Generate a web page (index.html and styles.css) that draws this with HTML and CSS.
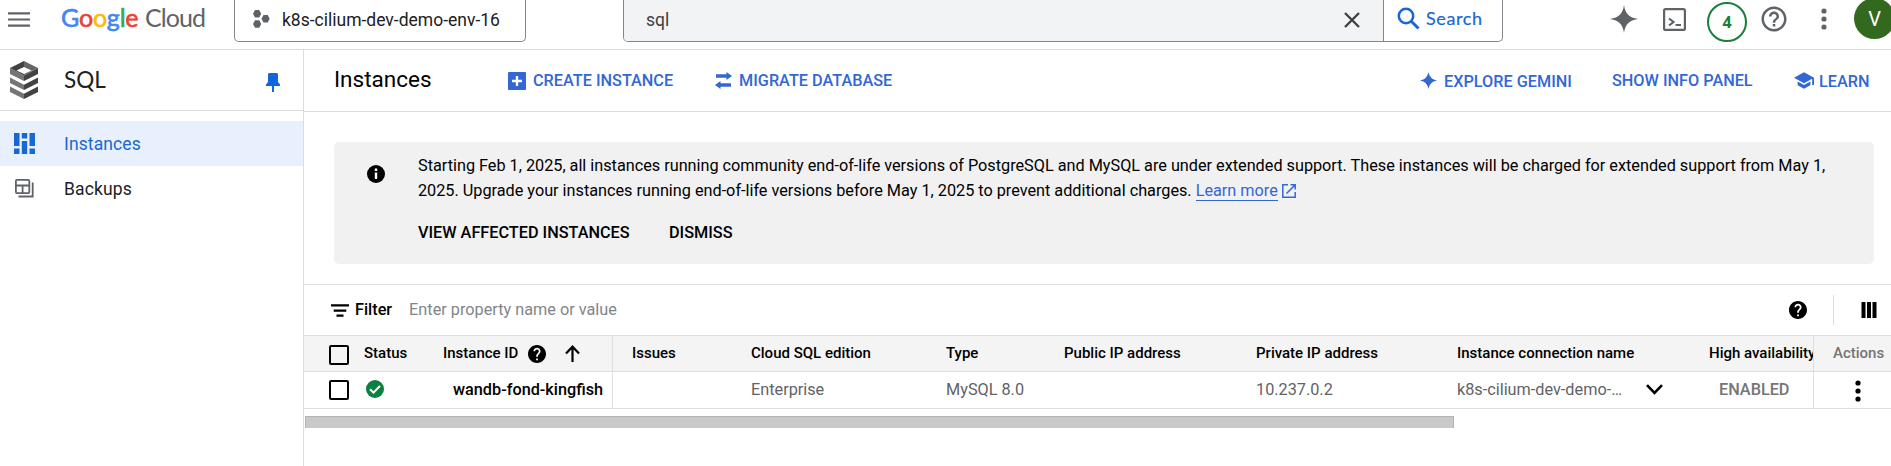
FILE: index.html
```html
<!DOCTYPE html>
<html lang="en">
<head>
<meta charset="utf-8">
<title>Instances – SQL – Google Cloud</title>
<link rel="stylesheet" href="styles.css">
</head>
<body>
<header class="topbar">
  <svg class="menu" width="22" height="15" viewBox="0 0 22 15"><path d="M0 1.400h22M0 7.500h22M0 13.600h22" stroke="#5f6368" stroke-width="2.200"/></svg>
  <div class="logo"><span class="google"><b class="c-blue">G</b><b class="c-red">o</b><b class="c-yellow">o</b><b class="c-blue">g</b><b class="c-green">l</b><b class="c-red">e</b></span><span class="cloud">Cloud</span></div>
  <div class="project">
    <svg width="17" height="20" viewBox="0 0 17 20" fill="#5f6368"><path d="M2 1h4.200l2 3.800-2 3.800H2L0 4.800zM2 11.200h4.200l2 3.800-2 3.800H2L0 15zM10.500 6h4.200l2 3.800-2 3.800h-4.200l-2-3.800z"/></svg>
    <span>k8s-cilium-dev-demo-env-16</span>
  </div>
  <div class="search">
    <div class="query"><span>sql</span>
      <svg width="16" height="16" viewBox="0 0 16 16"><path d="M1 1l14 14M15 1L1 15" stroke="#3c4043" stroke-width="2.300"/></svg>
    </div>
    <div class="go">
      <svg width="23" height="23" viewBox="0 0 23 23" fill="none" stroke="#1967d2" stroke-width="2.500"><circle cx="9" cy="9" r="7.200"/><path d="M14 14l7.500 7.500" stroke-width="3"/></svg>
      <span>Search</span>
    </div>
  </div>
  <div class="tools">
    <svg class="t-spark" width="28" height="28" viewBox="0 0 28 28"><path d="M14 0C15.400 9 19 12.600 28 14 19 15.400 15.400 19 14 28 12.600 19 9 15.400 0 14 9 12.600 12.600 9 14 0z" fill="#5f6368"/></svg>
    <svg class="t-term" width="23" height="23" viewBox="0 0 23 23" fill="none" stroke="#5f6368" stroke-width="2.200"><rect x="1.100" y="1.100" width="20.800" height="20.800" rx="1.500"/><path d="M6 10.500l4.500 3.500L6 17.500M12.500 17H18"/></svg>
    <div class="count">4</div>
    <svg class="t-help" width="26" height="26" viewBox="0 0 24 24" fill="#5f6368"><path d="M11 18h2v-2h-2v2zm1-16C6.480 2 2 6.480 2 12s4.480 10 10 10 10-4.480 10-10S17.520 2 12 2zm0 18c-4.410 0-8-3.590-8-8s3.590-8 8-8 8 3.590 8 8-3.590 8-8 8zm0-14c-2.210 0-4 1.790-4 4h2c0-1.100.9-2 2-2s2 .9 2 2c0 2-3 1.750-3 5h2c0-2.250 3-2.500 3-5 0-2.210-1.790-4-4-4z"/></svg>
    <svg class="t-dots" width="6" height="22" viewBox="0 0 6 22" fill="#5f6368"><circle cx="3" cy="3" r="2.600"/><circle cx="3" cy="11" r="2.600"/><circle cx="3" cy="19" r="2.600"/></svg>
    <div class="avatar">V</div>
  </div>
</header>
<div class="shell">
  <nav class="side">
    <div class="side-head">
      <svg width="28" height="38" viewBox="0 0 28 38">
        <path d="M0 16.500l14 7.200V29L0 22zM0 25.500l14 7.200V38L0 31z" fill="#757575"/>
        <path d="M28 16.500l-14 7.200V29l14-7zM28 25.500l-14 7.200V38l14-7z" fill="#424242"/>
        <path d="M0 7l14 7.500V20L0 13z" fill="#757575"/>
        <path d="M28 7l-14 7.500V20l14-7z" fill="#424242"/>
        <path d="M14 0L0 7l14 7.500v-1.500L6.500 9.500 14 6z" fill="#424242"/>
        <path d="M14 0l14 7-14 7.500v-1.500l7.500-3.500L14 6z" fill="#666"/>
      </svg>
      <span class="side-title">SQL</span>
      <svg class="pin" width="14" height="19" viewBox="0 0 14 19" fill="#1165de"><path d="M3 0h8l1 1v8l2 2.500V13H8v6H6v-6H0v-1.500L2 9V1z"/></svg>
    </div>
    <a class="item active"><svg width="21" height="21" viewBox="0 0 21 21" fill="#1967d2"><path d="M0 0h5.500v13H0zM0 15.500h5.500V21H0zM7.800 0h5.400v5.500H7.800zM7.800 8h5.400v13H7.800zM15.500 0H21v13h-5.500zM15.500 15.500H21V21h-5.500z"/></svg><span>Instances</span></a>
    <a class="item"><svg width="21" height="21" viewBox="0 0 21 21" fill="none" stroke="#5f6368" stroke-width="1.800"><rect x="1.900" y="1.900" width="13.400" height="13.200" rx="1"/><path d="M2 7.500h13.500M8.600 7.500V15M18.700 4.500v14H4.500"/></svg><span>Backups</span></a>
  </nav>
  <main class="main">
    <div class="head">
      <h1>Instances</h1>
      <a class="act create"><svg width="18" height="18" viewBox="0 0 18 18"><rect width="18" height="18" rx="1" fill="#3367d6"/><path d="M9 4v10M4 9h10" stroke="#fff" stroke-width="2.300"/></svg><span>CREATE INSTANCE</span></a>
      <a class="act migrate"><svg width="17" height="17" viewBox="0 0 17 17" fill="#3367d6"><path d="M1 2.200h10.500V0L17 4l-5.500 4V5.700H1zM16 11.300H5.500V9L0 13l5.500 4v-2.200H16z"/></svg><span>MIGRATE DATABASE</span></a>
      <a class="act gemini"><svg width="17" height="17" viewBox="0 0 28 28"><path d="M14 0C15.600 8 20 12.400 28 14 20 15.600 15.600 20 14 28 12.400 20 8 15.600 0 14 8 12.400 12.400 8 14 0z" fill="#3367d6"/></svg><span class="low">EXPLORE GEMINI</span></a>
      <a class="act info"><span>SHOW INFO PANEL</span></a>
      <a class="act learn"><svg width="20" height="17" viewBox="1 3 22 18" fill="#3367d6"><path d="M5 13.180v4L12 21l7-3.820v-4L12 17l-7-3.820zM12 3L1 9l11 6 9-4.910V17h2V9L12 3z"/></svg><span class="low">LEARN</span></a>
    </div>
    <section class="alert">
      <svg class="i-info" width="18" height="18" viewBox="0 0 18 18"><circle cx="9" cy="9" r="9"/><path d="M7.800 3.600h2.400V6H7.800zM7.800 7.500h2.400v6.500H7.800z" fill="#fff"/></svg>
      <div>
        <p>Starting Feb 1, 2025, all instances running community end-of-life versions of PostgreSQL and MySQL are under extended support. These instances will be charged for extended support from May 1,<br>2025. Upgrade your instances running end-of-life versions before May 1, 2025 to prevent additional charges. <a class="link">Learn more</a><svg class="ext" width="14" height="14" viewBox="0 0 14 14" fill="none" stroke="#3367d6" stroke-width="1.500"><path d="M6 .8H.8v12.400h12.400V8M8.500.8h4.700v4.700M13 1L4.500 9.500"/></svg></p>
        <div class="alert-btns"><a class="view">VIEW AFFECTED INSTANCES</a><a class="dismiss">DISMISS</a></div>
      </div>
    </section>
    <div class="filter">
      <svg width="18" height="13" viewBox="0 0 18 13"><path d="M0 1.300h18M2.700 6.700h12.600M5.500 11.700h7" stroke="#000" stroke-width="2.200"/></svg>
      <b>Filter</b><span class="placeholder">Enter property name or value</span>
      <svg class="f-help" width="18" height="18" viewBox="2 2 20 20"><path d="M12 2C6.480 2 2 6.480 2 12s4.480 10 10 10 10-4.480 10-10S17.520 2 12 2zm1 17h-2v-2h2v2zm2.070-7.750l-.9.920C13.450 12.900 13 13.500 13 15h-2v-.5c0-1.100.45-2.100 1.170-2.830l1.240-1.260c.37-.36.590-.86.590-1.410 0-1.100-.9-2-2-2s-2 .9-2 2H8c0-2.210 1.790-4 4-4s4 1.790 4 4c0 .88-.36 1.680-.93 2.250z"/></svg>
      <i class="sep"></i>
      <svg class="f-cols" width="16" height="16" viewBox="0 0 16 16"><path d="M.5 0h4v16h-4zM6 0h4v16H6zM11.500 0h4v16h-4z"/></svg>
    </div>
    <div class="row thead">
      <div class="check"><i class="box"></i></div>
      <div>Status</div>
      <div class="id"><span>Instance ID</span>
        <svg class="h-help" width="18" height="18" viewBox="2 2 20 20"><path d="M12 2C6.480 2 2 6.480 2 12s4.480 10 10 10 10-4.480 10-10S17.520 2 12 2zm1 17h-2v-2h2v2zm2.070-7.750l-.9.920C13.450 12.900 13 13.500 13 15h-2v-.5c0-1.100.45-2.100 1.170-2.830l1.240-1.260c.37-.36.590-.86.590-1.410 0-1.100-.9-2-2-2s-2 .9-2 2H8c0-2.210 1.790-4 4-4s4 1.790 4 4c0 .88-.36 1.680-.93 2.250z"/></svg>
        <svg class="h-arrow" width="15" height="17" viewBox="0 0 15 17" fill="none" stroke="#000" stroke-width="2.200"><path d="M7.500 17V2M1 8.500l6.500-6.800L14 8.500"/></svg></div>
      <div class="p">Issues</div>
      <div class="p">Cloud SQL edition</div>
      <div class="p">Type</div>
      <div class="p">Public IP address</div>
      <div class="p">Private IP address</div>
      <div class="p">Instance connection name</div>
      <div class="p high">High availability</div>
      <div class="actions">Actions</div>
    </div>
    <div class="row trow">
      <div class="check"><i class="box"></i></div>
      <div class="status"><svg width="18" height="18" viewBox="0 0 18 18"><circle cx="9" cy="9" r="9" fill="#0b8043"/><path d="M4 9.300l3.500 3.400L14 5.900" fill="none" stroke="#fff" stroke-width="2"/></svg></div>
      <div class="id name">wandb-fond-kingfish</div>
      <div class="p"></div>
      <div class="p">Enterprise</div>
      <div class="p">MySQL 8.0</div>
      <div class="p"></div>
      <div class="p">10.237.0.2</div>
      <div class="p conn"><span>k8s-cilium-dev-demo-…</span><svg width="17" height="11" viewBox="0 0 17 11"><path d="M1 1.200l7.500 7.600L16 1.200" fill="none" stroke="#000" stroke-width="2.600"/></svg></div>
      <div class="p enabled">ENABLED</div>
      <div class="actions"><svg width="6" height="22" viewBox="0 0 6 22"><circle cx="3" cy="3" r="2.600"/><circle cx="3" cy="11" r="2.600"/><circle cx="3" cy="19" r="2.600"/></svg></div>
    </div>
    <div class="scroll"></div>
  </main>
</div>
</body>
</html>
```
FILE: styles.css
```css
* { box-sizing: border-box; }
body { margin: 0; width: 1891px; height: 466px; overflow: hidden; background: #fff; color: #000; font: 16.25px/25px Roboto, "Noto Sans", sans-serif; }
svg { display: block; flex: none; }
span, a, b { white-space: nowrap; }

.topbar { display: flex; align-items: flex-start; height: 50px; border-bottom: 1px solid #dadce0; overflow: hidden; }
.topbar > * { flex: none; }
.menu { margin: 12px 0 0 8px; }
.logo { display: flex; width: 173px; margin-left: 31px; height: 38px; font: 25px/35px Lato, sans-serif; color: #5f6368; }
.logo b { font-weight: 400; -webkit-text-stroke: 0.6px; }
.google { width: 84px; letter-spacing: -0.2px; }
.cloud { letter-spacing: -0.9px; }
.c-blue { color: #4285f4; }
.c-red { color: #ea4335; }
.c-yellow { color: #fbbc04; }
.c-green { color: #34a853; }
.project { display: flex; align-items: flex-start; width: 292px; height: 42px; padding: 9px 0 0 18px; border: 1px solid #80868b; border-top: 0; border-radius: 0 0 5px 5px; font-size: 17.5px; line-height: 22px; color: #202124; }
.project span { margin-left: 12px; }
.search { display: flex; width: 880px; height: 42px; margin-left: 97px; border: 1px solid #80868b; border-top: 0; border-radius: 0 0 5px 5px; overflow: hidden; }
.query { display: flex; justify-content: space-between; width: 760px; padding: 9px 23px 0 22px; background: #f1f3f4; border-right: 1px solid #80868b; font-size: 17.5px; line-height: 22px; color: #3c4043; }
.query svg { margin-top: 3px; }
.go { display: flex; padding: 7px 0 0 13px; color: #1967d2; font: 18px/23px Lato, sans-serif; letter-spacing: 0.6px; }
.go span { margin-left: 6px; -webkit-text-stroke: 0.2px; }
.tools { display: flex; margin-left: 107px; }
.tools > * { flex: none; }
.t-spark { margin-top: 5px; }
.t-term { margin: 8px 0 0 25px; }
.count { width: 40px; height: 40px; margin: 2px 0 0 21px; border: 2px solid #188038; border-radius: 50%; text-align: center; font: bold 16px/36px "Open Sans", sans-serif; color: #188038; }
.t-help { width: 30px; height: 30px; margin: 4px 0 0 12px; }
.t-dots { margin: 8px 0 0 32px; }
.avatar { width: 41px; height: 41px; margin: -2px 0 0 27px; border-radius: 50%; background: #33691e; color: #fff; text-align: center; font-size: 20px; line-height: 43px; }

.shell { display: flex; height: 416px; }
.side { width: 304px; border-right: 1px solid #dadce0; }
.side-head { display: flex; align-items: flex-start; height: 61px; padding: 11px 0 0 10px; border-bottom: 1px solid #dadce0; margin-bottom: 10px; }
.side-title { margin: 4px 0 0 26px; font: 22.5px/30px Lato, sans-serif; color: #202124; }
.pin { margin: 12px 23px 0 auto; }
.item { display: flex; align-items: center; height: 45px; padding-left: 14px; font-size: 17.5px; letter-spacing: 0.12px; color: #202124; }
.item span { margin: 2px 0 0 29px; }
.active { background: #e8f0fe; color: #1967d2; }

.main { width: 1587px; }
.head { display: flex; align-items: center; height: 62px; padding-left: 30px; border-bottom: 1px solid #dadce0; }
h1 { width: 174px; margin: 0 0 2px; font-size: 22.5px; font-weight: 400; }
.act { display: flex; align-items: center; font-weight: 500; color: #3367d6; }
.act svg + span { margin-left: 7px; }
.act .low { margin-top: 1px; }
.create { width: 207px; }
.gemini { width: 192px; margin-left: auto; }
.info { width: 182px; }
.learn { width: 97px; }
.learn svg + span { margin-left: 5px; }
.alert { display: flex; width: 1540px; height: 122px; margin: 30px 0 0 30px; padding-left: 33px; border-radius: 5px; background: #f1f1f1; }
.i-info { margin: 23px 33px 0 0; }
.alert p { margin: 11px 0 0; letter-spacing: -0.01px; }
.link { color: #3367d6; border-bottom: 1px solid #3367d6; }
.ext { display: inline-block; margin-left: 4px; vertical-align: -2px; }
.alert-btns { display: flex; margin-top: 17px; font-weight: 500; }
.view { width: 251px; }
.filter { display: flex; align-items: center; height: 51px; margin-top: 20px; padding-left: 27px; border-top: 1px solid #dedede; }
.filter b { margin: 0 0 2px 6px; font-weight: 500; }
.placeholder { margin: 0 0 2px 17px; color: #80868b; }
.f-help { margin-left: auto; }
.sep { width: 1px; height: 30px; margin: 0 27px 0 26px; background: #dedede; }
.f-cols { margin-right: 14px; }

.row { display: grid; grid-template-columns: 60px 79px 170px 119px 195px 118px 192px 201px 252px 123px 78px; }
.row > div { display: flex; align-items: center; white-space: nowrap; min-width: 0; }
.row > .p { padding-left: 19px; }
.row > .check { padding: 0 0 0 25px; }
.box { width: 20px; height: 20px; border: 2px solid #000; border-radius: 2px; }
.thead { height: 37px; background: #f4f4f4; border-top: 1px solid #dedede; border-bottom: 1px solid #dedede; font-size: 15px; font-weight: 500; }
.row.thead > .check { padding-top: 3px; }
.row > .id { border-right: 1px solid #dedede; }
.h-help { margin-left: 10px; }
.h-arrow { margin-left: 19px; }
.row > .actions { border-left: 1px solid #dedede; padding-left: 19px; color: #757575; }
.row.thead > .actions { background: #f4f4f4; }
.trow { height: 37px; border-bottom: 1px solid #dedede; color: #5f6368; }
.trow > div { padding-bottom: 2px; }
.trow > .status { padding-left: 2px; }
.trow > .name { padding-left: 10px; font-weight: 500; color: #000; }
.row.trow > .actions { padding: 1px 0 0 41px; }
.conn svg { margin-left: 24px; }
.row.trow > .enabled { padding-left: 29px; font-weight: 500; color: #757575; }
.scroll { width: 1149px; height: 12px; margin: 7px 0 0 1px; background: #c9c9c9; border: solid #b4b4b4; border-width: 1px 1px 0 1px; }
```
